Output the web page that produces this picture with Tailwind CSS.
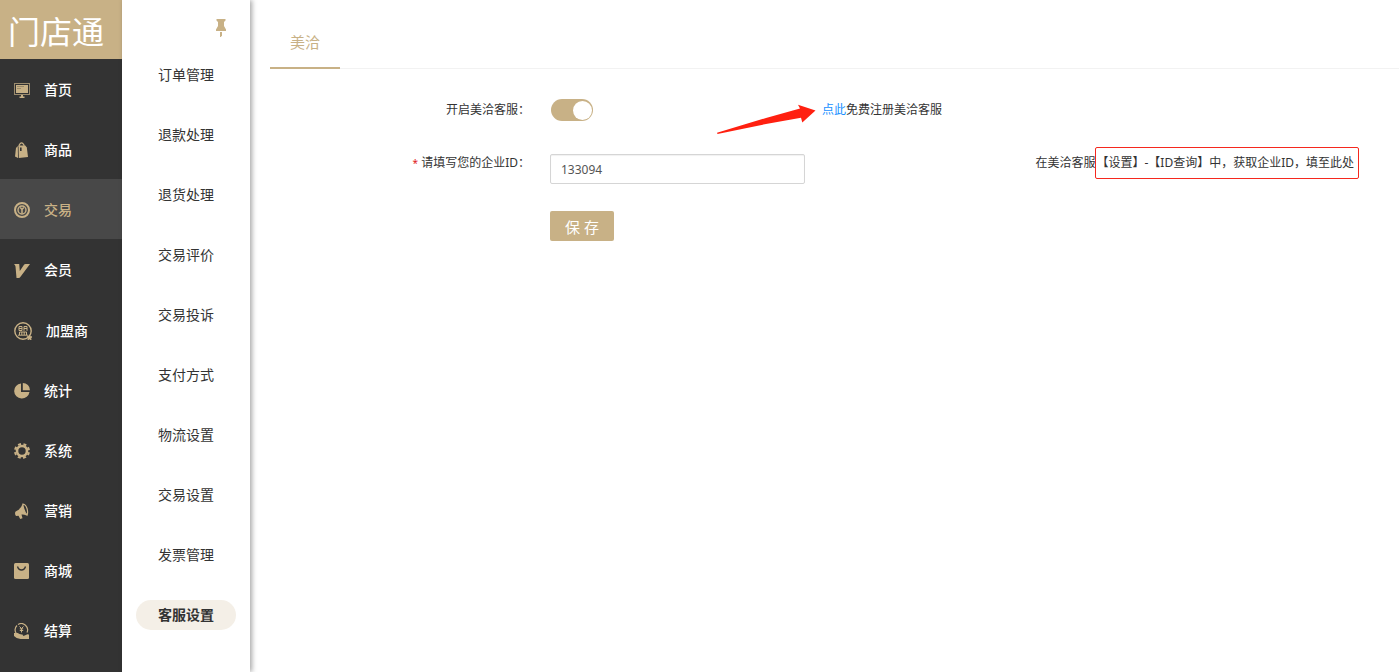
<!DOCTYPE html>
<html lang="zh-CN">
<head>
    <meta charset="UTF-8">
    <meta name="viewport" content="width=device-width, initial-scale=1.0">
    <title>门店通 - 客服设置</title>
    <script src="https://cdn.jsdelivr.net/npm/@tailwindcss/browser@4"></script>
</head>
<body class="bg-white text-[#333] font-['Noto_Sans','Noto_Sans_CJK_SC',sans-serif]">
    <div class="flex min-h-screen">
        <!-- Main menu -->
        <aside class="w-[122px] shrink-0 bg-[#333] text-white">
            <h1 class="h-[59px] bg-[#c8b186] pt-0.5 pl-2 text-[32px] leading-[60px]">门店通</h1>
            <nav class="flex flex-col text-sm font-medium">
                <a href="#" class="flex h-[60px] items-center gap-3.5 pt-0.5 pl-3.5">
                    <svg class="size-4 text-[#c8b186]" viewBox="0 0 16 16" fill="none">
                        <rect x="0.5" y="1.500" width="15" height="11" stroke="currentColor" opacity="0.7"/>
                        <rect x="2" y="3" width="12" height="8" fill="currentColor"/>
                        <path d="M3 4.500h7M3 6.500h4" stroke="#9a8a6a"/>
                        <path d="M7 13h2v1.500h1.500V16h-5v-1.500H7z" fill="currentColor"/>
                    </svg>
                    <span>首页</span>
                </a>
                <a href="#" class="flex h-[60px] items-center gap-3.5 pt-0.5 pl-3.5">
                    <svg class="size-4 text-[#c8b186]" viewBox="0 0 16 16">
                        <path d="M4.500 3.500h6.800l1.500 2L14 15l-9.200 1z" fill="currentColor"/>
                        <path d="M3.800 4L2 6 1 14.500 4 16z" fill="currentColor"/>
                        <path d="M5.200 5V3Q7.500-1.200 10 3V5" fill="none" stroke="currentColor" stroke-width="1.200"/>
                        <path d="M6.800 5.500v3.500" stroke="#333" stroke-width="1.600"/>
                    </svg>
                    <span>商品</span>
                </a>
                <a href="#" class="flex h-[60px] items-center gap-3.5 bg-[#484848] pt-0.5 pl-3.5 text-[#c8b186]">
                    <svg class="size-4" viewBox="0 0 16 16" fill="none" stroke="currentColor">
                        <circle cx="8" cy="8" r="7" stroke-width="2"/>
                        <circle cx="8" cy="8" r="4" stroke-width="1.400"/>
                        <path d="M6.200 5.500L8 7.500l1.800-2M8 7.500v4" stroke-width="1.500"/>
                    </svg>
                    <span>交易</span>
                </a>
                <a href="#" class="flex h-[60px] items-center gap-3.5 pt-0.5 pl-3.5">
                    <svg class="size-4 text-[#c8b186]" viewBox="0 0 16 16" fill="currentColor">
                        <path d="M0 2h5.200l.6 7L10 2.800Q10.500 2 11.500 2H16L6.500 14.800Q5.800 16 4.500 16H2.500L1.500 4.500Q1.300 3 0 2z"/>
                    </svg>
                    <span>会员</span>
                </a>
                <a href="#" class="flex h-[61px] items-center gap-3.5 pt-0.5 pl-3.5">
                    <svg class="size-[18px] text-[#c8b186]" viewBox="0 0 18 18" fill="none" stroke="currentColor">
                        <circle cx="9" cy="9" r="8.200" stroke-width="1.400"/>
                        <path d="M5 4.500h3v4H5zM5 6.500h3M10 8.800V4.500h3v4.300M10 6.500h3M5.500 13v-3h7v3M7.800 10v3M10.200 10v3M4 13.200h10" stroke-width="1"/>
                        <path d="M15.500 12.800l.9 1.700 1.600.3-1.200 1.300.3 1.800-1.600-.8-1.600.8.3-1.800-1.200-1.300 1.600-.3z" fill="currentColor" stroke-width="0.800"/>
                    </svg>
                    <span>加盟商</span>
                </a>
                <a href="#" class="flex h-[60px] items-center gap-3.5 pt-0.5 pl-3.5">
                    <svg class="size-4 text-[#c8b186]" viewBox="0 0 16 16" fill="currentColor">
                        <path d="M7 .5V9h8.500A7.700 7.500 0 1 1 7 .5z"/>
                        <path d="M8.800 0A7.200 7.200 0 0 1 16 7.200H8.800z"/>
                    </svg>
                    <span>统计</span>
                </a>
                <a href="#" class="flex h-[60px] items-center gap-3.5 pt-0.5 pl-3.5">
                    <svg class="size-4 text-[#c8b186]" viewBox="0 0 16 16" fill="none" stroke="currentColor">
                        <circle cx="8" cy="8" r="5" stroke-width="2.600"/>
                        <circle cx="8" cy="8" r="7" stroke-width="2" stroke-dasharray="3 2.498" stroke-dashoffset="-1.250"/>
                    </svg>
                    <span>系统</span>
                </a>
                <a href="#" class="flex h-[60px] items-center gap-3.5 pt-0.5 pl-3.5">
                    <svg class="size-4 text-[#c8b186]" viewBox="0 0 16 16" fill="currentColor">
                        <path d="M1 10Q1 8.500 2.500 8Q7 6 8.500 1L12.500 12.500Q9.500 11 7.500 11.500L8.500 15.200 6.200 16 4.500 12.800 2 13Q1 12 1 10z"/>
                        <path d="M9 1Q11.800 1.500 13 5.500T13 12.200Q11 10 9.800 6T9 1z" fill="#333" stroke="currentColor" stroke-width="1.200"/>
                    </svg>
                    <span>营销</span>
                </a>
                <a href="#" class="flex h-[60px] items-center gap-3.5 pt-0.5 pl-3.5">
                    <svg class="size-4 text-[#c8b186]" viewBox="0 0 16 16">
                        <rect width="15" height="16" rx="1.500" fill="currentColor"/>
                        <path d="M3.500 3.500Q4.500 7 7.500 7t4-3.500" fill="none" stroke="#333" stroke-width="1.300"/>
                    </svg>
                    <span>商城</span>
                </a>
                <a href="#" class="flex h-[60px] items-center gap-3.5 pt-0.5 pl-3.5">
                    <svg class="size-4 text-[#c8b186]" viewBox="0 0 16 16" fill="none" stroke="currentColor">
                        <path d="M2 10A6.300 6.300 0 0 1 3 2.500M4 1.500A6.300 6.300 0 0 1 13 9.500" stroke-width="1.200"/>
                        <path d="M5.500 3.500l2 2 2-2M7.500 5.500V9.500M5.800 5.800h3.400M5.800 7.500h3.400" stroke-width="1"/>
                        <path d="M0 10Q3 9 5.500 11l3.500.8q1 1-.5 1.200L6.500 13h3L13.500 11.200Q15 11 15 12v4H6.500Q2 15.500 0 13z" fill="currentColor" stroke="none"/>
                    </svg>
                    <span>结算</span>
                </a>
            </nav>
        </aside>

        <!-- Sub menu -->
        <aside class="w-32 shrink-0 bg-white shadow-[2px_0_5px_rgba(0,0,0,0.35)]">
            <div class="flex h-[45px] justify-end pt-[18px] pr-6">
                <button type="button" aria-label="固定菜单" class="h-5 w-2.5 text-[#c8b186]">
                    <svg class="h-5 w-2.5" viewBox="0 0 10 20" fill="currentColor">
                        <path d="M.5 1h9v1.500L8 4v4L10 11.500V13H0v-1.500L2 8V4L.5 2.500z"/>
                        <path d="M4 14h2v3.500l-1.200 1.500H4z"/>
                    </svg>
                </button>
            </div>
            <nav class="flex flex-col items-center gap-[30px] pt-[15px] text-sm leading-[30px]">
                <a href="#">订单管理</a>
                <a href="#">退款处理</a>
                <a href="#">退货处理</a>
                <a href="#">交易评价</a>
                <a href="#">交易投诉</a>
                <a href="#">支付方式</a>
                <a href="#">物流设置</a>
                <a href="#">交易设置</a>
                <a href="#">发票管理</a>
                <a href="#" class="w-[100px] rounded-full bg-[#f4efe7] text-center font-bold">客服设置</a>
            </nav>
        </aside>

        <!-- Content -->
        <main class="min-w-0 flex-1 pl-5">
            <nav class="flex h-[69px] items-end border-b border-[#f2f2f2]">
                <a href="#" class="-mb-px h-[52px] border-b-2 border-[#c8b186] px-5 text-[15px] leading-[50px] text-[#c8b186]">美洽</a>
            </nav>

            <form class="pt-[30px] text-xs">
                <div class="flex items-center">
                    <label for="enable" class="w-[260px] shrink-0 text-right">开启美洽客服：</label>
                    <div class="ml-5 flex w-[255px] shrink-0 pl-px">
                        <input id="enable" type="checkbox" role="switch" checked class="flex h-[22px] w-[42px] appearance-none items-center rounded-full bg-[#c8b186] px-px before:size-[19px] before:rounded-full before:bg-white checked:justify-end">
                    </div>
                    <p class="relative ml-[17px] leading-[22px]">
                        <svg class="absolute top-1 right-full mr-1.5 h-[32px] w-[100px]" viewBox="0 0 100 32" fill="#ff2010">
                            <path d="M1 29.800L50 15 84 5.500 82 1.800 99.500 7.500 86.300 19.500 85 14.800 50 21 1.500 31z"/>
                        </svg>
                        <a href="#" class="text-[#1890ff]">点此</a>免费注册美洽客服
                    </p>
                </div>

                <div class="mt-[26px] flex items-start">
                    <label for="companyId" class="w-[260px] shrink-0 text-right leading-8"><span class="text-[10px] text-[#e02020]">*</span> 请填写您的企业ID：</label>
                    <input id="companyId" type="text" value="133094" class="mt-[7px] ml-5 h-[30px] w-[255px] shrink-0 rounded-xs border border-[#d5d5d5] px-2.5 text-xs text-[#555] shadow-[inset_0_1px_1px_rgba(0,0,0,0.06)] outline-none">
                    <p class="mr-10 ml-auto flex leading-[30px] whitespace-nowrap">
                        <span class="py-px">在美洽客服</span>
                        <span class="rounded-xs border border-[#f5281e] pr-1">【设置】-【ID查询】中，获取企业ID，填至此处</span>
                    </p>
                </div>

                <button type="button" class="mt-[27px] ml-[280px] h-[30px] w-16 rounded-xs bg-[#c8b186] pt-0.5 text-[15px] text-white">保 存</button>
            </form>
        </main>
    </div>
</body>
</html>
